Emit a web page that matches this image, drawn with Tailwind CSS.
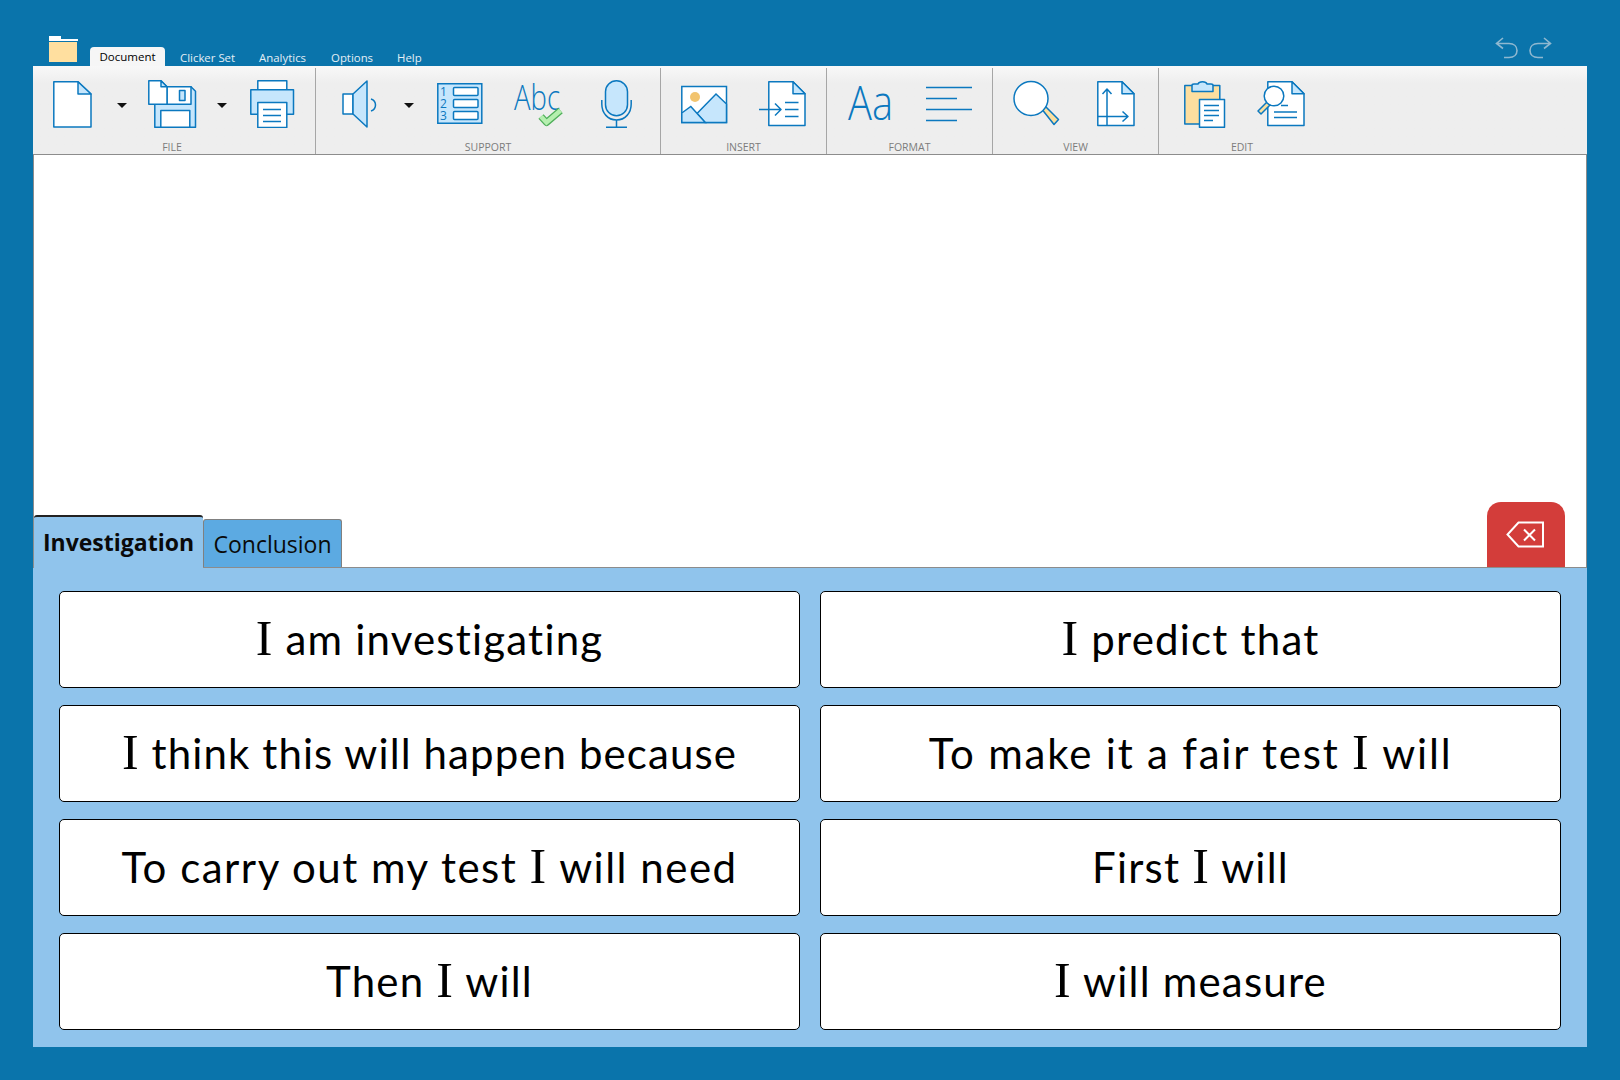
<!DOCTYPE html>
<html lang="en">
  <head>
    <meta charset="UTF-8" />
    <title>Clicker</title>
    <script src="https://cdn.jsdelivr.net/npm/@tailwindcss/browser@4"></script>
  </head>
  <body class="w-[1620px] h-[1080px] overflow-hidden bg-[#0a74ab] font-['Open_Sans',sans-serif]">
    <div class="flex flex-col w-[1554px] ml-[33px]">
      <!-- title bar -->
      <header class="h-[66px] flex items-end relative">
        <svg class="ml-[16px] mb-[4px] w-[29px] h-[26px]" viewBox="49 36 29 26">
          <path d="M49 36h12v3h17v2H49z" fill="#fff" />
          <path d="M49 42h28v20H49z" fill="#ffdf9f" />
        </svg>
        <div class="ml-[12px] w-[75px] h-[19px] bg-[#f6f6f6] rounded-t-[4px] text-[11.5px] leading-[19px] text-center text-black">Document</div>
        <nav class="flex text-[11.4px] leading-[16px] text-[#e4eef5] mb-0 h-[16px]">
          <span class="ml-[15px]">Clicker Set</span>
          <span class="ml-[24px]">Analytics</span>
          <span class="ml-[25px]">Options</span>
          <span class="ml-[24px]">Help</span>
        </nav>
        <div class="ml-auto mr-[35px] mb-[7px] flex gap-[11px]">
          <svg class="w-[23px] h-[22px]" viewBox="1494 37 23 22" fill="none" stroke="#8fb8d0" stroke-width="1.6">
            <path d="M1502 38l-6.500 5.500 6.500 5M1496 43.500h12c5 0 8 3 8 7s-3 7-8 7h-5" />
          </svg>
          <svg class="w-[23px] h-[22px]" viewBox="1529 37 23 22" fill="none" stroke="#8fb8d0" stroke-width="1.6">
            <path d="M1544 38l6.500 5.500-6.500 5M1550 43.500h-12c-5 0-8 3-8 7s3 7 8 7h5" />
          </svg>
        </div>
      </header>

      <!-- ribbon -->
      <section class="h-[89px] flex bg-gradient-to-b from-[#f8f8f8] to-[#eeeeee] to-20% border-b border-[#8c8c8c] text-[10.5px] leading-[14px] text-[#7c7c7c] text-center">
        <div class="w-[283px] mt-[2px] border-r border-[#a6a6a6]">
          <div class="flex pt-[12px] h-[60px]">
            <svg class="ml-[20px] w-[39px] h-[48px]" viewBox="53 80 39 48" fill="#fff" stroke="#0b78bf" stroke-width="1.500" stroke-linejoin="round">
              <path d="M53.800 81.800H78L91 94v33H53.800z" />
              <path d="M78 81.800V94h13z" fill="#c6e6fc" />
            </svg>
            <svg class="ml-[25px] w-[10px] h-[48px]" viewBox="117 80 10 48"><path d="M117 103h10l-5 5z" fill="#111" /></svg>
            <svg class="ml-[21px] w-[49px] h-[48px]" viewBox="148 80 49 48" stroke="#0b78bf" stroke-width="1.500" stroke-linejoin="round">
              <path d="M154.800 86.800H191l4.500 4.500v36h-40.700z" fill="#c6e6fc" />
              <path d="M167 86.800h24v17.500h-24z" fill="#fff" />
              <path d="M179.500 90.500h5.500v10h-5.500z" fill="#c6e6fc" />
              <path d="M160.800 110.500h29v16.800h-29z" fill="#fff" />
              <path d="M148.800 80.800H161l6 6v17.500h-18.200z" fill="#fff" />
              <path d="M161 80.800v6h6z" fill="#c6e6fc" />
            </svg>
            <svg class="ml-[20px] w-[10px] h-[48px]" viewBox="217 80 10 48"><path d="M217 103h10l-5 5z" fill="#111" /></svg>
            <svg class="ml-[23px] w-[45px] h-[48px]" viewBox="250 80 45 48" stroke="#0b78bf" stroke-width="1.500" stroke-linejoin="round">
              <path d="M257.800 80.800h29v9h-29z" fill="#fff" />
              <path d="M250.800 89.800h42.700v24.500h-42.700z" fill="#c6e6fc" />
              <path d="M257.800 102.500h29v25h-29z" fill="#fff" />
              <path d="M263 109.500h18M263 115.500h18M263 121.500h18" fill="none" />
            </svg>
          </div>
          <div class="mt-[12px] pr-[4px]">FILE</div>
        </div>

        <div class="w-[345px] mt-[2px] border-r border-[#a6a6a6]">
          <div class="flex pt-[12px] h-[60px]">
            <svg class="ml-[26px] w-[36px] h-[48px]" viewBox="342 80 36 48" stroke="#0b78bf" stroke-width="1.500" stroke-linejoin="round">
              <path d="M343 94h10v20h-10z" fill="#fff" />
              <path d="M353 94l14-13v46l-14-13z" fill="#c6e6fc" />
              <path d="M371 99c6 2 6 10 0 12" fill="none" />
            </svg>
            <svg class="ml-[26px] w-[10px] h-[48px]" viewBox="404 80 10 48"><path d="M404 103h10l-5 5z" fill="#111" /></svg>
            <svg class="ml-[23px] w-[46px] h-[48px]" viewBox="437 80 46 48" stroke="#0b78bf" stroke-width="1.500">
              <path d="M437.800 83.800h44v39.500h-44z" fill="#c6e6fc" />
              <rect x="453.500" y="87.500" width="24.500" height="8" rx="1" fill="#fff" />
              <rect x="453.500" y="99.500" width="24.500" height="8" rx="1" fill="#fff" />
              <rect x="453.500" y="111.500" width="24.500" height="8" rx="1" fill="#fff" />
              <text x="440" y="96" font-size="12" fill="#0b78bf" stroke="none">1</text>
              <text x="440" y="108" font-size="12" fill="#0b78bf" stroke="none">2</text>
              <text x="440" y="120" font-size="12" fill="#0b78bf" stroke="none">3</text>
            </svg>
            <svg class="ml-[31px] w-[50px] h-[48px] overflow-visible" viewBox="514 80 50 48">
              <text x="514" y="110" font-size="34" font-weight="300" textLength="46" lengthAdjust="spacingAndGlyphs" fill="#0b78bf">Abc</text>
              <path d="M541 116.500l5.500 6 14-12" fill="none" stroke="#4fae5a" stroke-width="7" stroke-linejoin="round" />
              <path d="M541 116.500l5.500 6 14-12" fill="none" stroke="#b5efaf" stroke-width="4.500" />
            </svg>
            <svg class="ml-[37px] w-[32px] h-[48px]" viewBox="601 80 32 48" stroke="#0b78bf" stroke-width="1.500" fill="none">
              <rect x="605.500" y="80.800" width="22" height="35" rx="11" fill="#c6e6fc" />
              <path d="M601.800 100v4c0 9 6 16 14.700 16s14.700-7 14.700-16v-4M616.500 120v7M606 127.300h21" />
            </svg>
          </div>
          <div class="mt-[12px]">SUPPORT</div>
        </div>

        <div class="w-[166px] mt-[2px] border-r border-[#a6a6a6]">
          <div class="flex pt-[12px] h-[60px]">
            <svg class="ml-[20px] w-[47px] h-[48px]" viewBox="681 80 47 48" stroke="#0b78bf" stroke-width="1.500">
              <path d="M681.800 86.500h44.700v36h-44.700z" fill="#fff" />
              <circle cx="695" cy="97" r="5" fill="#f2c46f" stroke="none" />
              <path d="M697 113.500l19-19.500 10.500 10v18.500H705z" fill="#c6e6fc" />
              <path d="M681.800 113l9-6.500 14.500 16h-23.500z" fill="#c6e6fc" />
            </svg>
            <svg class="ml-[31px] w-[47px] h-[48px]" viewBox="759 80 47 48" stroke="#0b78bf" stroke-width="1.500" stroke-linejoin="round">
              <path d="M768.800 81.800H793l12 12v31.800h-36.200z" fill="#fff" />
              <path d="M793 81.800v12h12z" fill="#c6e6fc" />
              <path d="M759 109.500h21.500M775 103.500l6 6-6 6M785 102.500h13.500M785 109.500h13.500M785 116.500h13.500" fill="none" />
            </svg>
          </div>
          <div class="mt-[12px]">INSERT</div>
        </div>

        <div class="w-[166px] mt-[2px] border-r border-[#a6a6a6]">
          <div class="flex pt-[12px] h-[60px]">
            <svg class="ml-[21px] w-[46px] h-[48px] overflow-visible" viewBox="848 80 46 48">
              <text x="848" y="120" font-size="47" font-weight="300" textLength="45" lengthAdjust="spacingAndGlyphs" fill="#0b78bf">Aa</text>
            </svg>
            <svg class="ml-[32px] w-[47px] h-[48px]" viewBox="926 80 47 48" stroke="#0b78bf" stroke-width="1.500" fill="none">
              <path d="M926 87.500h46M926 98.500h31M926 109.500h46M926 120.500h31" />
            </svg>
          </div>
          <div class="mt-[12px]">FORMAT</div>
        </div>

        <div class="w-[166px] mt-[2px] border-r border-[#a6a6a6]">
          <div class="flex pt-[12px] h-[60px]">
            <svg class="ml-[20px] w-[47px] h-[48px]" viewBox="1013 80 47 48" stroke="#0b78bf" stroke-width="1.500" stroke-linejoin="round">
              <path d="M1041 108l3-3 14.500 14.500-4.500 5z" fill="#fbdf9f" />
              <circle cx="1031" cy="98.500" r="17" fill="#fff" />
            </svg>
            <svg class="ml-[37px] w-[38px] h-[48px]" viewBox="1097 80 38 48" stroke="#0b78bf" stroke-width="1.500" stroke-linejoin="round">
              <path d="M1097.800 81.800H1122l12 12v31.800h-36.200z" fill="#fff" />
              <path d="M1122 81.800v12h12z" fill="#c6e6fc" />
              <path d="M1107 125.500V89M1102.500 94l4.500-5 4.500 5M1098 116.500h30M1122.500 111.500l5.500 5-5.500 5" fill="none" />
            </svg>
          </div>
          <div class="mt-[12px]">VIEW</div>
        </div>

        <div class="w-[166px] mt-[2px]">
          <div class="flex pt-[12px] h-[60px]">
            <svg class="ml-[25px] w-[42px] h-[48px]" viewBox="1184 80 42 48" stroke="#0b78bf" stroke-width="1.500" stroke-linejoin="round">
              <path d="M1184.800 85.500h35v38.500h-35z" fill="#fdde9f" />
              <path d="M1192 91.500v-6c0-1 1-1.500 2-1.500h4c1-3 8-3 9 0h4c1 0 2 .5 2 1.500v6z" fill="#c6e6fc" />
              <path d="M1199.500 99.500h25v27.800h-25z" fill="#fff" />
              <path d="M1204 105.500h15M1204 110.500h15M1204 115.500h15M1204 120.500h9" fill="none" />
            </svg>
            <svg class="ml-[31px] w-[48px] h-[48px]" viewBox="1257 80 48 48" stroke="#0b78bf" stroke-width="1.500" stroke-linejoin="round">
              <path d="M1267.800 81.800H1292l12 12v31.800h-36.200z" fill="#fff" />
              <path d="M1292 81.800v12h12z" fill="#c6e6fc" />
              <path d="M1267 102l3 3-9 9-3-3z" fill="#fbdf9f" />
              <circle cx="1274" cy="96" r="9.800" fill="#fff" />
              <path d="M1281 105.500h7M1274 112h23M1274 117.500h23" fill="none" />
            </svg>
          </div>
          <div class="mt-[12px]">EDIT</div>
        </div>
      </section>

      <!-- document area, tabs sit on its bottom edge -->
      <section class="h-[413px] flex items-end justify-between bg-white border-x border-b border-[#8c8c8c]">
        <div class="flex items-end">
          <div class="w-[169px] h-[53px] bg-[#90c4ec] border-t-2 border-[#222] rounded-t-[3px] text-[23px] leading-[50px] font-bold text-[#0a0a0a] text-center -mb-px">Investigation</div>
          <div class="w-[139px] h-[48px] bg-[#5caae2] border border-b-0 border-[#808080] rounded-t-[3px] text-[23px] leading-[49px] text-[#0a0a0a] text-center">Conclusion</div>
        </div>
        <button class="w-[78px] h-[65px] mr-[21px] bg-[#d33d3a] rounded-t-[14px] flex items-center justify-center">
          <svg class="w-[38px] h-[27px] mb-[1px] mr-[3px]" viewBox="1505 523 38 27" fill="none" stroke="#fff" stroke-width="2">
            <path d="M1517.500 524.500h24.500v24h-24.500l-11-12zM1523 531.500l11 11M1534 531.500l-11 11" />
          </svg>
        </button>
      </section>

      <!-- phrase grid -->
      <main class="h-[479px] bg-[#90c4ec] px-[26px] pt-[23px]">
        <div class="grid grid-cols-2 gap-x-[20px] gap-y-[17px] text-[42px] tracking-[1.2px] text-black font-['Lato',sans-serif]">
          <div class="h-[97px] bg-white border border-black rounded-[5px] flex items-center justify-center"><p class="whitespace-pre"><span class="font-['Liberation_Serif'] text-[50px] leading-none">I</span> am investigating</p></div>
          <div class="h-[97px] bg-white border border-black rounded-[5px] flex items-center justify-center"><p class="whitespace-pre"><span class="font-['Liberation_Serif'] text-[50px] leading-none">I</span> predict that</p></div>
          <div class="h-[97px] bg-white border border-black rounded-[5px] flex items-center justify-center"><p class="whitespace-pre tracking-[1.1px]"><span class="font-['Liberation_Serif'] text-[50px] leading-none">I</span> think this will happen because</p></div>
          <div class="h-[97px] bg-white border border-black rounded-[5px] flex items-center justify-center"><p class="whitespace-pre tracking-[1.8px]">To make it a fair test <span class="font-['Liberation_Serif'] text-[50px] leading-none">I</span> will</p></div>
          <div class="h-[97px] bg-white border border-black rounded-[5px] flex items-center justify-center"><p class="whitespace-pre tracking-[1.5px]">To carry out my test <span class="font-['Liberation_Serif'] text-[50px] leading-none">I</span> will need</p></div>
          <div class="h-[97px] bg-white border border-black rounded-[5px] flex items-center justify-center"><p class="whitespace-pre">First <span class="font-['Liberation_Serif'] text-[50px] leading-none">I</span> will</p></div>
          <div class="h-[97px] bg-white border border-black rounded-[5px] flex items-center justify-center"><p class="whitespace-pre">Then <span class="font-['Liberation_Serif'] text-[50px] leading-none">I</span> will</p></div>
          <div class="h-[97px] bg-white border border-black rounded-[5px] flex items-center justify-center"><p class="whitespace-pre"><span class="font-['Liberation_Serif'] text-[50px] leading-none">I</span> will measure</p></div>
        </div>
      </main>
    </div>
  </body>
</html>
